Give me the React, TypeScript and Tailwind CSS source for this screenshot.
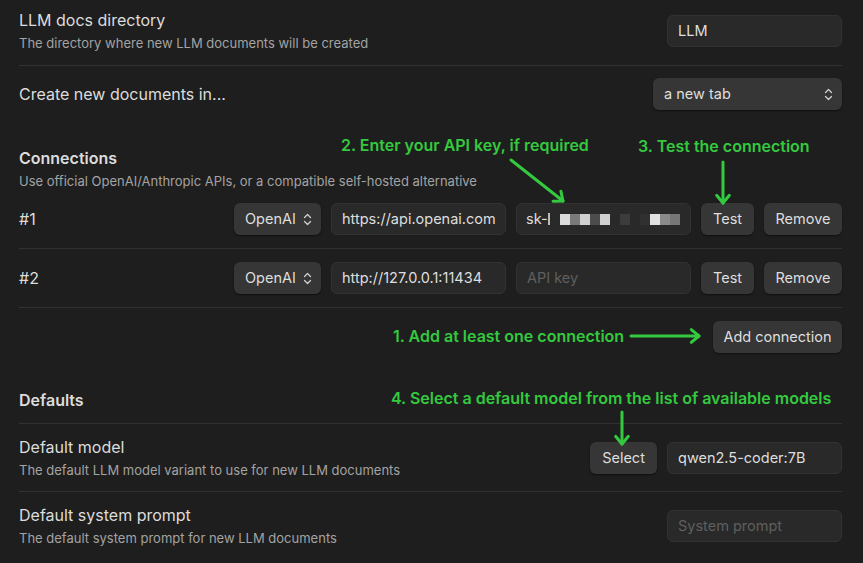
import React from "react";

const font = { fontFamily: "Inter, 'Noto Sans', 'Liberation Sans', sans-serif" };

function Chevrons() {
  return (
    <svg width="9" height="13" viewBox="0 0 9 13" fill="none" stroke="#cfcfcf" strokeWidth="1.3" strokeLinecap="round" strokeLinejoin="round">
      <path d="M1.5 4.5 L4.5 1.5 L7.5 4.5" />
      <path d="M1.5 8.5 L4.5 11.5 L7.5 8.5" />
    </svg>
  );
}

function TextInput({ value, placeholder, w = "w-[175px]" }: { value?: string; placeholder?: string; w?: string }) {
  return (
    <div className={`${w} h-[32px] rounded-[6px] bg-[#292929] border border-[#323232] flex items-center px-[10px] text-[14.5px]`}>
      {value ? <span className="text-[#dedede]">{value}</span> : <span className="text-[#5f5f5f]">{placeholder}</span>}
    </div>
  );
}

function Btn({ children, w }: { children: React.ReactNode; w: string }) {
  return (
    <div className={`${w} h-[32px] rounded-[6px] bg-[#363636] shadow-[0_1px_2px_rgba(0,0,0,0.5)] flex items-center justify-center text-[14.5px] text-[#dedede]`}>
      {children}
    </div>
  );
}

function Select({ label, w }: { label: string; w: string }) {
  return (
    <div className={`${w} h-[32px] rounded-[6px] bg-[#363636] shadow-[0_1px_2px_rgba(0,0,0,0.5)] flex items-center justify-between pl-[11px] pr-[9px] text-[14.5px] text-[#dedede]`}>
      <span>{label}</span>
      <Chevrons />
    </div>
  );
}

function Info({ title, desc }: { title: string; desc?: string }) {
  return (
    <div className="flex flex-col gap-[4px]">
      <div className="text-[16px] leading-[20px] text-[#dcdcdc]">{title}</div>
      {desc && <div className="text-[13px] leading-[18px] text-[#a3a3a3]">{desc}</div>}
    </div>
  );
}

const maskBlocks = ["#dcdcdc", "#7a7a7a", "#cfcfcf", "#4c4c4c", "#d0d0d0", "transparent", "#3c3c3c", "transparent", "#303030", "#e0e0e0", "#8a8a8a", "#767676"];

function ApiKeyInput() {
  return (
    <div className="w-[175px] h-[32px] rounded-[6px] bg-[#292929] border border-[#323232] flex items-center px-[9px] text-[14.5px]">
      <span className="text-[#dedede]">sk-</span>
      <span className="block w-[2px] h-[12px] bg-[#bbbbbb]" />
      <div className="flex ml-[10px]">
        {maskBlocks.map((c, i) => (
          <span key={i} className="block w-[10px] h-[11px]" style={{ background: c }} />
        ))}
      </div>
    </div>
  );
}

function Arrow({ x1, y1, x2, y2 }: { x1: number; y1: number; x2: number; y2: number }) {
  const ang = Math.atan2(y2 - y1, x2 - x1);
  const L = 10;
  const a1 = ang + Math.PI * 0.78;
  const a2 = ang - Math.PI * 0.78;
  const p1 = `${x2 + L * Math.cos(a1)},${y2 + L * Math.sin(a1)}`;
  const p2 = `${x2 + L * Math.cos(a2)},${y2 + L * Math.sin(a2)}`;
  return (
    <g stroke="#34c93f" strokeWidth="3" strokeLinecap="round" strokeLinejoin="round" fill="none">
      <line x1={x1} y1={y1} x2={x2} y2={y2} />
      <polyline points={`${p1} ${x2},${y2} ${p2}`} />
    </g>
  );
}

export default function App() {
  return (
    <div className="relative w-[863px] h-[563px] bg-[#1e1e1e] overflow-hidden" style={font}>
      <div className="pl-[19px] pr-[21px]">
        {/* LLM docs directory */}
        <div className="h-[66px] flex items-start justify-between pt-[10px] border-b border-[#313131]">
          <Info title="LLM docs directory" desc="The directory where new LLM documents will be created" />
          <div className="mt-[5px]">
            <TextInput value="LLM" />
          </div>
        </div>
        {/* Create new documents */}
        <div className="h-[56px] flex items-center justify-between">
          <Info title="Create new documents in..." />
          <Select label="a new tab" w="w-[189px]" />
        </div>
        {/* Connections heading */}
        <div className="h-[68px] pt-[26px]">
          <div className="flex flex-col gap-[4px]">
            <div className="text-[16px] leading-[20px] font-semibold text-[#dcdcdc]">Connections</div>
            <div className="text-[13px] leading-[18px] text-[#a3a3a3]">Use official OpenAI/Anthropic APIs, or a compatible self-hosted alternative</div>
          </div>
        </div>
        {/* #1 */}
        <div className="h-[59px] flex items-center justify-between border-b border-[#313131]">
          <div className="text-[16px] text-[#dcdcdc]">#1</div>
          <div className="flex items-center gap-[10px]">
            <Select label="OpenAI" w="w-[87px]" />
            <TextInput value="https://api.openai.com" />
            <ApiKeyInput />
            <Btn w="w-[53px]">Test</Btn>
            <Btn w="w-[78px]">Remove</Btn>
          </div>
        </div>
        {/* #2 */}
        <div className="h-[59px] flex items-center justify-between border-b border-[#313131]">
          <div className="text-[16px] text-[#dcdcdc]">#2</div>
          <div className="flex items-center gap-[10px]">
            <Select label="OpenAI" w="w-[87px]" />
            <TextInput value="http://127.0.0.1:11434" />
            <TextInput placeholder="API key" />
            <Btn w="w-[53px]">Test</Btn>
            <Btn w="w-[78px]">Remove</Btn>
          </div>
        </div>
        {/* Add connection */}
        <div className="h-[57px] flex items-center justify-end">
          <Btn w="w-[129px]">Add connection</Btn>
        </div>
        {/* Defaults heading */}
        <div className="h-[59px] pt-[25px] border-b border-[#313131]">
          <div className="text-[16px] leading-[20px] font-semibold text-[#dcdcdc]">Defaults</div>
        </div>
        {/* Default model */}
        <div className="h-[68px] flex items-center justify-between border-b border-[#313131]">
          <Info title="Default model" desc="The default LLM model variant to use for new LLM documents" />
          <div className="flex items-center gap-[10px]">
            <Btn w="w-[67px]">Select</Btn>
            <TextInput value="qwen2.5-coder:7B" />
          </div>
        </div>
        {/* Default system prompt */}
        <div className="h-[68px] flex items-center justify-between">
          <Info title="Default system prompt" desc="The default system prompt for new LLM documents" />
          <TextInput placeholder="System prompt" />
        </div>
      </div>

      {/* Annotations */}
      <div className="absolute left-[341px] top-[134px] text-[16px] leading-[22px] font-semibold text-[#34c93f]">2. Enter your API key, if required</div>
      <div className="absolute left-[638px] top-[135px] text-[16px] leading-[22px] font-semibold text-[#34c93f]">3. Test the connection</div>
      <div className="absolute left-[393px] top-[325px] text-[16px] leading-[22px] font-semibold text-[#34c93f]">1. Add at least one connection</div>
      <div className="absolute left-[391px] top-[387px] text-[16px] leading-[22px] font-semibold text-[#34c93f]">4. Select a default model from the list of available models</div>
      <svg className="absolute left-0 top-0 pointer-events-none" width="863" height="563">
        <Arrow x1={511} y1={160} x2={563} y2={201} />
        <Arrow x1={723} y1={162} x2={723} y2={203} />
        <Arrow x1={631} y1={336} x2={699} y2={336} />
        <Arrow x1={622} y1={412} x2={622} y2={444} />
      </svg>
    </div>
  );
}
